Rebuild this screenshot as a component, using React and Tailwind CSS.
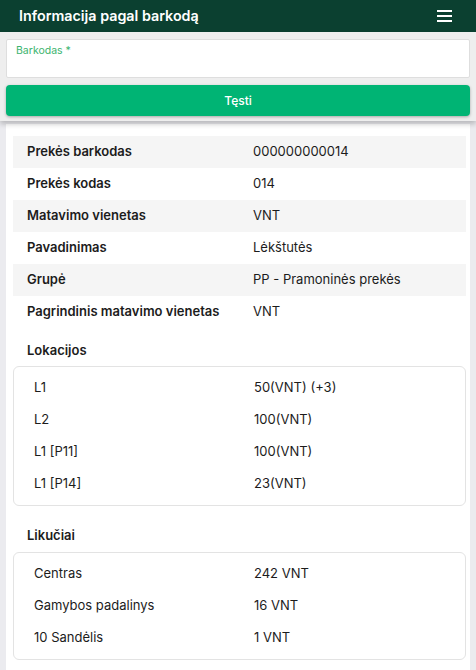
import React from "react";

const info = [
  ["Prekės barkodas", "000000000014"],
  ["Prekės kodas", "014"],
  ["Matavimo vienetas", "VNT"],
  ["Pavadinimas", "Lėkštutės"],
  ["Grupė", "PP - Pramoninės prekės"],
  ["Pagrindinis matavimo vienetas", "VNT"],
];

const locs = [
  ["L1", "50(VNT) (+3)"],
  ["L2", "100(VNT)"],
  ["L1 [P11]", "100(VNT)"],
  ["L1 [P14]", "23(VNT)"],
];

const stock = [
  ["Centras", "242 VNT"],
  ["Gamybos padalinys", "16 VNT"],
  ["10 Sandėlis", "1 VNT"],
];

function BoxList({ rows }) {
  return (
    <div className="ml-[7px] mr-[4px] rounded-[6px] border border-[#e3e3e3] py-[5px]">
      {rows.map(([a, b]) => (
        <div key={a} className="flex h-[32px] items-center text-[13px] text-[#1c1c1c]">
          <div className="w-[240px] pl-[20px]">{a}</div>
          <div>{b}</div>
        </div>
      ))}
    </div>
  );
}

export default function App() {
  return (
    <div
      className="w-[476px] h-[670px] overflow-hidden bg-[#ebebef]"
      style={{ fontFamily: "Inter, 'Noto Sans', sans-serif" }}
    >
      <div className="flex h-[32px] items-center justify-between bg-[#0b4030] pl-[19px] pr-[24px]">
        <div className="text-[14.3px] font-semibold text-white">Informacija pagal barkodą</div>
        <div className="flex flex-col gap-[3px]">
          <div className="h-[2px] w-[15px] bg-white"></div>
          <div className="h-[2px] w-[15px] bg-white"></div>
          <div className="h-[2px] w-[15px] bg-white"></div>
        </div>
      </div>
      <div className="relative z-10 bg-[#eeeeee] px-[6px] pt-[7px] pb-[5px] shadow-[0_3px_5px_rgba(0,0,0,0.22)]">
        <div className="h-[39px] rounded-[2px] border border-[#dedede] bg-white px-[9px] pt-[3px]">
          <div className="text-[10.5px] text-[#3cb46e]">Barkodas *</div>
        </div>
        <div className="mt-[7px] flex h-[31px] items-center justify-center rounded-[4px] bg-[#00b474] text-[12px] font-medium text-white shadow-[0_1px_3px_rgba(0,0,0,0.3)]">
          Tęsti
        </div>
      </div>
      <div className="mx-[6px] mt-[3px] bg-white pt-[12px] pb-[12px]">
        <div className="ml-[7px] mr-[4px]">
          {info.map(([a, b], i) => (
            <div
              key={a}
              className={`flex h-[32px] items-center text-[13px] text-[#1c1c1c] ${i % 2 === 0 ? "bg-[#f5f5f5]" : ""}`}
            >
              <div className="w-[240px] pl-[14px] font-semibold">{a}</div>
              <div>{b}</div>
            </div>
          ))}
        </div>
        <div className="mt-[8px] flex h-[30px] items-center pl-[21px] text-[13px] font-semibold text-[#1c1c1c]">
          Lokacijos
        </div>
        <BoxList rows={locs} />
        <div className="mt-[15px] mb-[1px] flex h-[30px] items-center pl-[21px] text-[13px] font-semibold text-[#1c1c1c]">
          Likučiai
        </div>
        <BoxList rows={stock} />
      </div>
    </div>
  );
}
